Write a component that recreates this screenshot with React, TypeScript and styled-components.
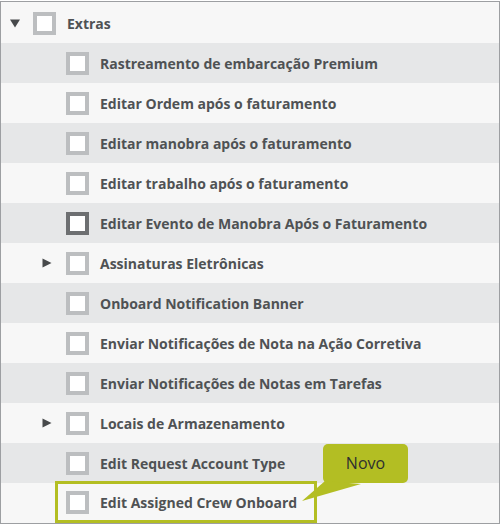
import React from 'react';
import styled, { createGlobalStyle } from 'styled-components';

const GlobalStyle = createGlobalStyle`
  body {
    margin: 0;
    background: #ffffff;
    font-family: "Open Sans", "Liberation Sans", sans-serif;
  }
`;

const lime = '#b3be23';
const textGray = '#4f5254';

type Item = {
  label: string;
  level: number;
  toggle?: 'open' | 'closed';
  focused?: boolean;
  isNew?: boolean;
};

const items: Item[] = [
  { label: 'Extras', level: 0, toggle: 'open' },
  { label: 'Rastreamento de embarcação Premium', level: 1 },
  { label: 'Editar Ordem após o faturamento', level: 1 },
  { label: 'Editar manobra após o faturamento', level: 1 },
  { label: 'Editar trabalho após o faturamento', level: 1 },
  { label: 'Editar Evento de Manobra Após o Faturamento', level: 1, focused: true },
  { label: 'Assinaturas Eletrônicas', level: 1, toggle: 'closed' },
  { label: 'Onboard Notification Banner', level: 1 },
  { label: 'Enviar Notificações de Nota na Ação Corretiva', level: 1 },
  { label: 'Enviar Notificações de Notas em Tarefas', level: 1 },
  { label: 'Locais de Armazenamento', level: 1, toggle: 'closed' },
  { label: 'Edit Request Account Type', level: 1 },
  { label: 'Edit Assigned Crew Onboard', level: 1, isNew: true },
];

const Panel = styled.div`
  position: relative;
  width: 500px;
  margin-top: 1px;
  padding-top: 1px;
  box-sizing: border-box;
  border: 1px solid #9d9fa2;
  background: #f7f7f7;
`;

const Row = styled.div<{ $shaded: boolean; $level: number }>`
  display: flex;
  align-items: center;
  height: 40px;
  padding-left: ${(p) => 8 + p.$level * 33}px;
  background: ${(p) => (p.$shaded ? '#e6e7e8' : '#f7f7f7')};
`;

const Toggle = styled.div`
  width: 24px;
  height: 23px;
  display: flex;
  align-items: center;
  flex-shrink: 0;
`;

const Highlight = styled.div<{ $on: boolean }>`
  display: flex;
  align-items: center;
  align-self: stretch;
  margin-left: ${(p) => (p.$on ? '-11px' : '0')};
  margin-top: ${(p) => (p.$on ? '-2px' : '0')};
  padding: ${(p) => (p.$on ? '0 17px 0 8px' : '0')};
  border: ${(p) => (p.$on ? `3px solid ${lime}` : 'none')};
`;

const Box = styled.span<{ $focused: boolean }>`
  display: block;
  width: 23px;
  height: 23px;
  box-sizing: border-box;
  border: 4px solid ${(p) => (p.$focused ? '#6d6f71' : '#bcbec0')};
  background: #ffffff;
  flex-shrink: 0;
`;

const Label = styled.span`
  margin-left: 11px;
  font-size: 14px;
  font-weight: 700;
  color: ${textGray};
  white-space: nowrap;
`;

const Bubble = styled.div`
  position: absolute;
  left: 322px;
  top: 442px;
  width: 85px;
  height: 39px;
  border-radius: 5px;
  background: ${lime};
  display: flex;
  align-items: center;
  justify-content: center;
  font-size: 16px;
  color: #2e2f30;
  padding-bottom: 2px;
  box-sizing: border-box;
`;

const Tail = styled.svg`
  position: absolute;
  left: 290px;
  top: 470px;
  overflow: visible;
`;

const Caret = ({ dir }: { dir: 'open' | 'closed' }) =>
  dir === 'open' ? (
    <svg width="12" height="9" viewBox="0 0 12 9">
      <polygon points="1,0.5 11,0.5 6,8.5" fill="#47494b" />
    </svg>
  ) : (
    <svg width="10" height="10" viewBox="0 0 10 10">
      <polygon points="0.5,0.5 9.5,5 0.5,9.5" fill="#47494b" />
    </svg>
  );

export default function App() {
  return (
    <>
      <GlobalStyle />
      <Panel>
        {items.map((it, i) => (
          <Row key={it.label} $shaded={i % 2 === 1} $level={it.level}>
            <Toggle>{it.toggle && <Caret dir={it.toggle} />}</Toggle>
            <Highlight $on={!!it.isNew}>
              <Box $focused={!!it.focused} />
              <Label>{it.label}</Label>
            </Highlight>
          </Row>
        ))}
        <Bubble>Novo</Bubble>
        <Tail width="80" height="40" viewBox="0 0 80 40">
          <polygon points="11,29 34,9 70,12" fill={lime} />
        </Tail>
      </Panel>
    </>
  );
}
